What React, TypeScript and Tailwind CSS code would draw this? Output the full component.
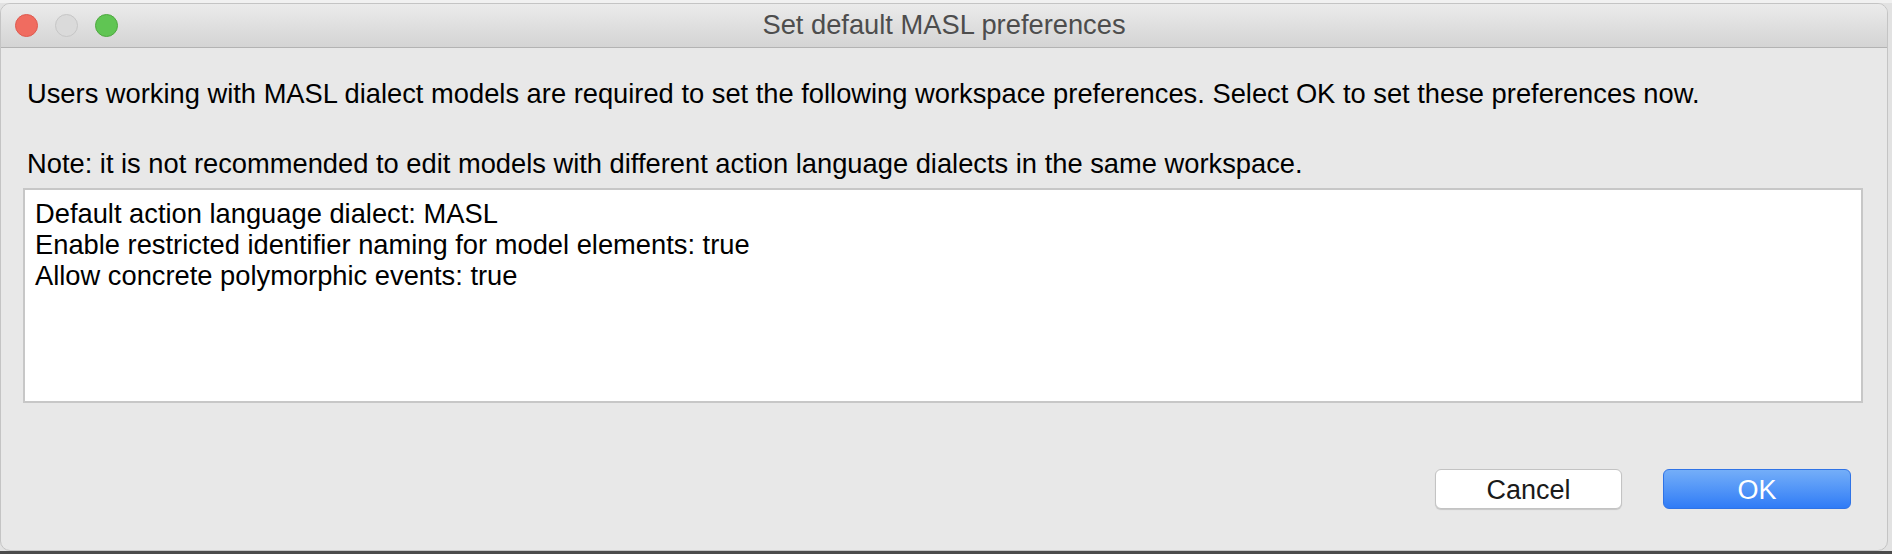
import React from 'react';

const font = { fontFamily: '"Liberation Sans", Arial, sans-serif' };

const prefs = [
  'Default action language dialect: MASL',
  'Enable restricted identifier naming for model elements: true',
  'Allow concrete polymorphic events: true',
];

const TrafficLights: React.FC = () => (
  <div className="flex items-center gap-[17px] pl-[14px]">
    <span className="block h-[23px] w-[23px] rounded-full border border-[#de5a4f] bg-[#f06c60]" />
    <span className="block h-[23px] w-[23px] rounded-full border border-[#c6c6c6] bg-[#dadada]" />
    <span className="block h-[23px] w-[23px] rounded-full border border-[#4ea83f] bg-[#60c553]" />
  </div>
);

export default function App() {
  return (
    <div className="flex h-[554px] w-full flex-col bg-[#e2e2e2]" style={font}>
      <div className="h-[3px] w-full bg-[#f1f1f1]" />
      <div className="flex h-[548px] w-[1888px] flex-col overflow-hidden rounded-[10px] border border-[#c4c4c4] bg-[#e8e8e8]">
        {/* Title bar */}
        <div className="relative flex h-[44px] shrink-0 items-center border-b border-[#b3b3b3] bg-gradient-to-b from-[#ebebeb] to-[#d4d4d4]">
          <TrafficLights />
          <div className="absolute inset-0 flex items-center justify-center text-[27.3px] text-[#4d4d4d]">
            Set default MASL preferences
          </div>
        </div>

        {/* Body */}
        <div className="flex flex-1 flex-col pt-[31px] pl-[22px] pr-[24px]">
          <p className="pl-[4px] text-[27.3px] leading-[30px] text-black">
            Users working with MASL dialect models are required to set the following workspace preferences. Select OK to set these preferences now.
          </p>
          <p className="mt-[40px] pl-[4px] text-[27.3px] leading-[30px] text-black">
            Note: it is not recommended to edit models with different action language dialects in the same workspace.
          </p>

          <div className="mt-[9px] h-[215px] border-2 border-[#c7c7c7] bg-white pt-[8px] pl-[10px]">
            {prefs.map((p) => (
              <div key={p} className="text-[27.3px] leading-[31px] text-black">
                {p}
              </div>
            ))}
          </div>

          <div className="mt-[66px] flex justify-end gap-[41px] pr-[12px]">
            <button className="h-[40px] w-[187px] rounded-[6px] border border-[#c3c3c3] bg-white text-[27px] text-[#1a1a1a] shadow-[0_1px_1px_rgba(0,0,0,0.15)]">
              Cancel
            </button>
            <button className="h-[40px] w-[188px] rounded-[6px] border border-[#2f73e6] bg-gradient-to-b from-[#74aef8] to-[#2f7bf6] text-[27px] text-white">
              OK
            </button>
          </div>
        </div>
      </div>
      <div className="h-[3px] w-full bg-[#4b4b4b]" />
    </div>
  );
}
